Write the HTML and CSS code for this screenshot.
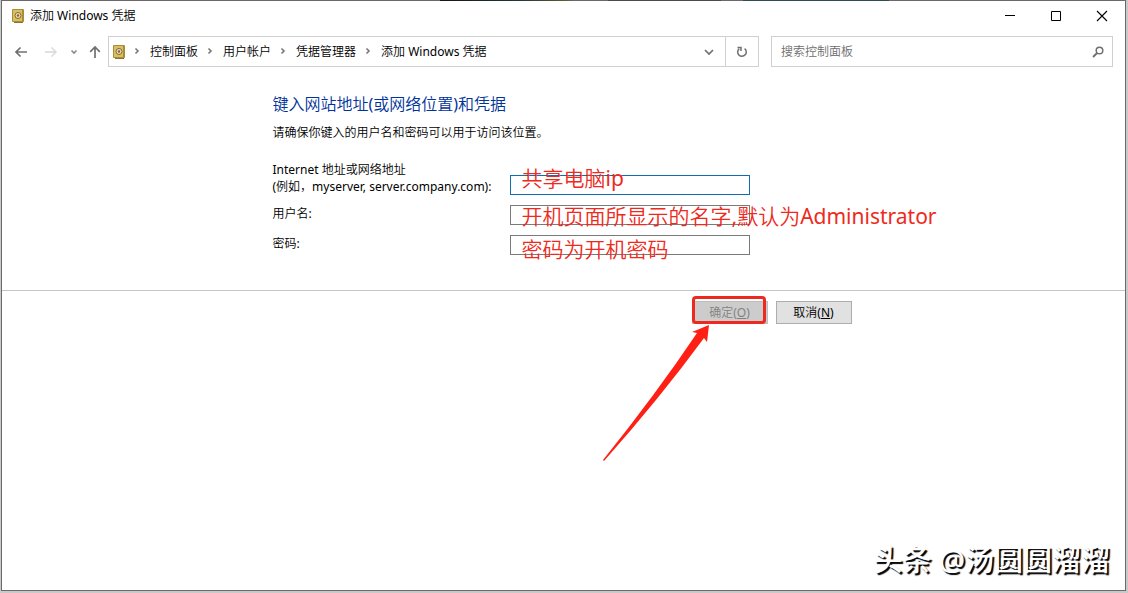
FILE: index.html
```html
<!DOCTYPE html>
<html lang="zh-CN">
<head>
    <meta charset="UTF-8">
    <meta name="viewport" content="width=device-width, initial-scale=1.0">
    <title>添加 Windows 凭据</title>
    <link rel="stylesheet" href="styles.css">
</head>
<body>

    <svg class="symbols" aria-hidden="true">
        <symbol id="safe" viewBox="0 0 12 14">
            <rect x="0" y="0" width="12" height="13" rx="1" fill="#a98d35"/>
            <rect x="1" y="1" width="9" height="11" fill="#d9bf62"/>
            <rect x="2" y="13" width="9" height="1" fill="#8b7430"/>
            <circle cx="6" cy="6.5" r="3" fill="#eee0b0" stroke="#80683a"/>
            <circle cx="6" cy="6.5" r="1.2" fill="#8a5a3a"/>
        </symbol>
        <symbol id="chevron" viewBox="0 0 6 8">
            <path d="M1.5 1.5L4 4L1.5 6.5" fill="none" stroke="#777" stroke-width="1.6"/>
        </symbol>
    </svg>

    <div class="window">
        <header class="title-bar">
            <svg class="safe-icon"><use href="#safe"/></svg>
            <h1 class="title">添加 Windows 凭据</h1>
            <div class="window-buttons">
                <button class="window-btn" aria-label="最小化">
                    <svg width="12" height="12"><path d="M1 5.5H11" stroke="#000"/></svg>
                </button>
                <button class="window-btn" aria-label="最大化">
                    <svg width="12" height="12"><path d="M1.5 1.5H10.5V10.5H1.5Z" fill="none" stroke="#000"/></svg>
                </button>
                <button class="window-btn" aria-label="关闭">
                    <svg width="12" height="12"><path d="M1 1L11 11M11 1L1 11" stroke="#000" stroke-width="1.1"/></svg>
                </button>
            </div>
        </header>

        <nav class="nav-bar">
            <div class="nav-buttons">
                <button class="nav-btn" aria-label="后退">
                    <svg width="14" height="12"><path d="M13 6H2M6.5 1.5L2 6L6.5 10.5" fill="none" stroke="#707070" stroke-width="1.7"/></svg>
                </button>
                <button class="nav-btn" aria-label="前进" disabled>
                    <svg width="14" height="12"><path d="M1 6H12M7.5 1.5L12 6L7.5 10.5" fill="none" stroke="#d8d8d8" stroke-width="1.4"/></svg>
                </button>
                <button class="nav-btn nav-recent" aria-label="最近浏览的位置">
                    <svg width="8" height="6"><path d="M1.5 1.5L4 4L6.5 1.5" fill="none" stroke="#8a8a8a" stroke-width="1.6"/></svg>
                </button>
                <button class="nav-btn nav-up" aria-label="向上">
                    <svg width="12" height="14"><path d="M6 13V2M1.2 6.8L6 2L10.8 6.8" fill="none" stroke="#707070" stroke-width="1.7"/></svg>
                </button>
            </div>
            <div class="address">
                <svg class="safe-icon"><use href="#safe"/></svg>
                <ol class="crumbs">
                    <li><svg class="chevron"><use href="#chevron"/></svg><a href="#">控制面板</a></li>
                    <li><svg class="chevron"><use href="#chevron"/></svg><a href="#">用户帐户</a></li>
                    <li><svg class="chevron"><use href="#chevron"/></svg><a href="#">凭据管理器</a></li>
                    <li><svg class="chevron"><use href="#chevron"/></svg><a href="#">添加 Windows 凭据</a></li>
                </ol>
                <button class="address-btn" aria-label="以前的位置">
                    <svg width="10" height="8"><path d="M1 2L5 6L9 2" fill="none" stroke="#707070" stroke-width="1.7"/></svg>
                </button>
                <button class="address-btn refresh" aria-label="刷新">
                    <svg width="12" height="12"><path d="M8.6 2.6A4.3 4.3 0 1 1 3.2 2.7M1.5 1.5H5V5" fill="none" stroke="#707070" stroke-width="1.5"/></svg>
                </button>
            </div>
            <form class="search">
                <input class="search-input" type="search" placeholder="搜索控制面板" aria-label="搜索控制面板">
                <button class="search-btn" type="button" aria-label="搜索">
                    <svg width="12" height="12"><circle cx="7.5" cy="4.5" r="3.3" fill="none" stroke="#707070" stroke-width="1.5"/><path d="M5.1 7L1 11" stroke="#707070" stroke-width="1.9"/></svg>
                </button>
            </form>
        </nav>

        <main>
            <form id="credential" class="column">
                <h2 class="heading">键入网站地址(或网络位置)和凭据</h2>
                <p class="hint">请确保你键入的用户名和密码可以用于访问该位置。</p>
                <div class="fields">
                    <label for="address">Internet 地址或网络地址<br>(例如，myserver, server.company.com):</label>
                    <div class="field">
                        <input class="text-box active" id="address" type="text">
                        <span class="note note-address">共享电脑ip</span>
                    </div>
                    <label for="user">用户名:</label>
                    <div class="field">
                        <input class="text-box" id="user" type="text">
                        <span class="note note-user">开机页面所显示的名字,默认为Administrator</span>
                    </div>
                    <label for="password">密码:</label>
                    <div class="field">
                        <input class="text-box" id="password" type="password">
                        <span class="note note-password">密码为开机密码</span>
                    </div>
                </div>
            </form>
        </main>

        <footer class="actions">
            <div class="column action-row">
                <div class="ok">
                    <button class="action-btn" type="submit" form="credential" disabled>确定(<u>O</u>)</button>
                    <span class="highlight"></span>
                    <svg class="arrow" width="108" height="138" viewBox="0 0 108 138">
                        <path d="M107 1L90 8L95 9Q54 70 1 136L2 137Q58 74 102 14L105 18Z" fill="#ff2015"/>
                    </svg>
                </div>
                <button class="action-btn" type="button">取消(<u>N</u>)</button>
            </div>
        </footer>

        <p class="watermark">头条 @汤圆圆溜溜</p>
    </div>

</body>
</html>
```
FILE: styles.css
```css
* {
    box-sizing: border-box;
}
body {
    margin: 0;
    background: #c9c9c9;
    color: #000;
    font-family: "Noto Sans", "Noto Sans CJK SC DemiLight", "Noto Sans CJK SC", sans-serif;
    font-size: 12px;
}
button, input {
    font: inherit;
    color: inherit;
}
button {
    display: flex;
    align-items: center;
    justify-content: center;
    padding: 0;
    border: none;
    background: none;
}
.symbols {
    display: none;
}
.window {
    position: relative;
    display: flex;
    flex-direction: column;
    min-height: calc(100vh - 2px);
    margin: 0 2px 2px 1px;
    border: 1px solid #6a6a6a;
    background: #fff;
}
/* desktop showing along the top edge */
.window::before {
    content: "";
    position: absolute;
    top: -1px;
    left: 0;
    right: 0;
    height: 1px;
    background: linear-gradient(to right, transparent 39%, #151515 39%, #24343a 46%, #5a5a30 50%, transparent 51%, transparent 54%, #4a4a4a 54%, #4a4a4a 64%, transparent 64%, transparent 66%, #2f4c50 66%, #2f4c50 79%, transparent 79%);
}

/* title bar */
.title-bar {
    display: flex;
    align-items: center;
    height: 29px;
    padding-left: 10px;
}
.safe-icon {
    flex: none;
    width: 12px;
    height: 14px;
}
.title {
    margin: 0 auto 0 6px;
    padding-bottom: 2px;
    font-size: 12px;
    font-weight: normal;
}
.window-buttons {
    display: flex;
}
.window-btn {
    width: 46px;
    height: 28px;
}

/* navigation */
.nav-bar {
    display: flex;
    height: 31px;
    margin: 6px 12px 0 12px;
}
.nav-buttons {
    display: flex;
    align-items: center;
    width: 94px;
}
.nav-btn {
    width: 14px;
    height: 31px;
    margin-right: 16px;
}
.nav-recent {
    width: 8px;
    margin: 0 11px 0 -4px;
}
.nav-up {
    width: 12px;
    margin: 0;
}
.address {
    display: flex;
    flex: 651;
    align-items: center;
    padding-left: 4px;
    border: 1px solid #d0d0d0;
}
.crumbs {
    display: flex;
    margin: 0 auto 0 0;
    padding: 0 0 2px;
    list-style: none;
}
.crumbs li {
    display: flex;
    align-items: center;
    padding-left: 9px;
}
.crumbs a {
    color: #000;
    text-decoration: none;
}
.chevron {
    width: 6px;
    height: 8px;
    margin-right: 10px;
}
.address-btn {
    width: 33px;
    height: 29px;
}
.refresh {
    border-left: 1px solid #d0d0d0;
}
.search {
    display: flex;
    flex: 343;
    margin-left: 12px;
    border: 1px solid #d0d0d0;
}
.search-input {
    flex: 1;
    min-width: 0;
    padding: 0 0 0 9px;
    border: none;
    background: none;
    outline: none;
}
.search-input::placeholder {
    color: #6d6d6d;
}
.search-btn {
    width: 28px;
}

/* form */
.column {
    width: 100%;
    max-width: 582px;
    margin: 0 auto;
    padding-right: 3px;
}
main {
    padding: 25px 0 35px;
}
.heading {
    margin: 0;
    color: #003399;
    font-size: 16px;
    font-weight: normal;
    line-height: 24px;
}
.hint {
    margin: 8px 0 20px;
    line-height: 17px;
}
.fields {
    display: grid;
    grid-template-columns: 237px 240px;
    align-items: end;
    row-gap: 10px;
    line-height: 17px;
}
.fields label {
    align-self: start;
    white-space: nowrap;
}
.field {
    position: relative;
    height: 20px;
}
.text-box {
    display: block;
    width: 100%;
    height: 20px;
    padding: 0 4px;
    border: 1px solid #7a7a7a;
    background: #fff;
    outline: none;
}
.text-box.active {
    border-color: #0f6fae;
}
/* red remarks laid over the boxes */
.note {
    position: absolute;
    left: 12px;
    color: #ee2a20;
    font-size: 21px;
    line-height: 28px;
    white-space: nowrap;
    pointer-events: none;
}
.note-address {
    top: -11px;
}
.note-user {
    top: -3px;
}
.note-password {
    top: 0;
}

/* buttons */
.actions {
    border-top: 1px solid #c8c4c0;
    padding-top: 10px;
}
.action-row {
    display: flex;
    justify-content: flex-end;
    gap: 8px;
}
.ok {
    position: relative;
}
.action-btn {
    display: block;
    width: 76px;
    height: 23px;
    border: 1px solid #adadad;
    background: #e1e1e1;
    line-height: 20px;
}
.action-btn:disabled {
    border-color: #bfbfbf;
    background: #ccc;
    color: #838383;
}
.highlight {
    position: absolute;
    top: -5px;
    left: 0;
    width: 74px;
    height: 28px;
    border: 3px solid #ee2a20;
    border-radius: 4px;
}
.arrow {
    position: absolute;
    top: 23px;
    left: -90px;
}

.watermark {
    position: absolute;
    right: 15px;
    bottom: 10px;
    margin: 0;
    color: #fff;
    font-family: "Noto Sans", "Noto Sans CJK SC", sans-serif;
    font-size: 29px;
    font-weight: 500;
    line-height: 40px;
    text-shadow: 2px 2px 1px #000;
}
```
